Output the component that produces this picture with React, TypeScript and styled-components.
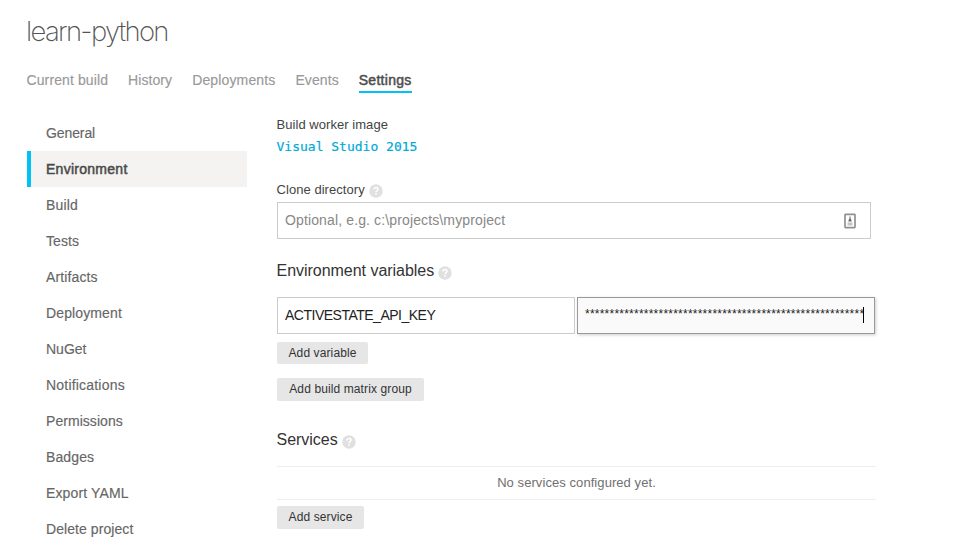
import React from "react";
import styled, { createGlobalStyle } from "styled-components";

const GlobalStyle = createGlobalStyle`
  * { box-sizing: border-box; }
  html, body { margin: 0; padding: 0; background: #fff; }
  body {
    font-family: "Liberation Sans", Arial, sans-serif;
    font-size: 14px;
    color: #333;
    overflow: hidden;
  }
`;

const Page = styled.div`
  width: 979px;
  height: 553px;
  padding: 0 0 0 27px;
  overflow: hidden;
`;

const Title = styled.h1`
  margin: 0 0 0 -1px;
  padding-top: 14px;
  height: 70px;
  font-family: Inter, "Liberation Sans", sans-serif;
  font-size: 27.5px;
  font-weight: 200;
  line-height: 34px;
  letter-spacing: -1.68px;
  color: #555;
`;

const Tabs = styled.nav`
  display: flex;
  gap: 20px;
  height: 45px;
  margin-left: -0.5px;
`;

const Tab = styled.a<{ $active?: boolean; $tracking: number }>`
  height: 23px;
  line-height: 20px;
  white-space: nowrap;
  letter-spacing: ${(p) => p.$tracking}px;
  color: ${(p) => (p.$active ? "#4d4d4d" : "#999")};
  border-bottom: 2px solid ${(p) => (p.$active ? "#00c3f5" : "transparent")};
  -webkit-text-stroke: ${(p) => (p.$active ? "0.5px #4d4d4d" : "0.15px #999")};
`;

const Columns = styled.div`
  display: flex;
  align-items: flex-start;
`;

const Sidebar = styled.nav`
  width: 220px;
  margin-right: 30px;
  flex: none;
`;

const SideItem = styled.a<{ $active?: boolean; $tracking: number }>`
  display: block;
  height: 36px;
  line-height: 36px;
  padding-left: 15px;
  border-left: 4px solid ${(p) => (p.$active ? "#00c3f5" : "transparent")};
  background: ${(p) => (p.$active ? "#f4f3f1" : "transparent")};
  color: ${(p) => (p.$active ? "#4a4a4a" : "#666")};
  letter-spacing: ${(p) => p.$tracking}px;
  -webkit-text-stroke: ${(p) => (p.$active ? "0.5px #4a4a4a" : "0.15px #666")};
`;

const Main = styled.main`
  width: 599px;
`;

const Label = styled.div`
  display: flex;
  height: 20px;
  margin-left: -0.5px;
  line-height: 20px;
  font-size: 13px;
  letter-spacing: 0.05px;
  color: #444;
`;

const ImageLink = styled.a`
  display: block;
  height: 20px;
  margin: 2px 0 23px -0.5px;
  line-height: 20px;
  font-family: "DejaVu Sans Mono", monospace;
  font-size: 13px;
  color: #00a9d8;
  -webkit-text-stroke: 0.2px #00a9d8;
`;

const Heading = styled.h2<{ $top: number; $bottom: number }>`
  display: flex;
  height: 22px;
  margin: ${(p) => p.$top}px 0 ${(p) => p.$bottom}px -0.5px;
  line-height: 22px;
  font-size: 16px;
  font-weight: 400;
  letter-spacing: -0.03px;
  color: #333;
`;

const HelpSvg = styled.svg<{ $top: number }>`
  flex: none;
  margin: ${(p) => p.$top}px 0 0 4px;
`;

const InputRow = styled.div`
  display: flex;
  gap: 2px;
`;

const Field = styled.div<{ $width: number; $focus?: boolean; $top?: number }>`
  display: flex;
  align-items: center;
  width: ${(p) => p.$width}px;
  height: 37px;
  margin-top: ${(p) => p.$top ?? 0}px;
  padding: 0 7px;
  white-space: nowrap;
  border: 1px solid ${(p) => (p.$focus ? "#999" : "#ccc")};
  background: ${(p) => (p.$focus ? "#fafafa" : "#fff")};
  box-shadow: ${(p) => (p.$focus ? "1px 1px 3px rgba(0,0,0,.2)" : "none")};
  color: #222;
`;

const Placeholder = styled.span`
  flex: 1;
  padding-bottom: 2px;
  letter-spacing: 0.13px;
  color: #888;
`;

const Value = styled.span`
  padding-bottom: 1px;
  letter-spacing: -0.5px;
`;

const Secret = styled.span`
  padding-bottom: 3px;
  font-size: 12px;
  letter-spacing: 0.23px;
`;

const Caret = styled.span`
  width: 1px;
  height: 16px;
  margin-bottom: 1px;
  margin-left: -1px;
  background: #000;
`;

const Button = styled.button<{ $width: number; $top: number; $height?: number }>`
  display: block;
  width: ${(p) => p.$width}px;
  height: ${(p) => p.$height ?? 23}px;
  margin: ${(p) => p.$top}px 0 0;
  padding: 0;
  border: 0;
  border-radius: 2px;
  background: #e6e6e6;
  color: #333;
  font: 12px/21px "Liberation Sans", Arial, sans-serif;
  letter-spacing: 0.11px;
  white-space: nowrap;
`;

const EmptyRow = styled.div`
  height: 34px;
  border-top: 1px solid #eee;
  border-bottom: 1px solid #eee;
  text-align: center;
  line-height: 32px;
  font-size: 13px;
  letter-spacing: 0.07px;
  color: #707070;
`;

const Help = ({ top }: { top: number }) => (
  <HelpSvg $top={top} width="14" height="14" viewBox="0 0 14 14">
    <circle cx="7" cy="7" r="6.7" fill="#e0e0e0" />
    <path
      d="M5 5.500C5 4.300 5.900 3.600 7 3.600s2 .7 2 1.700C9 6.600 7 6.500 7 8.200"
      fill="none"
      stroke="#fff"
      strokeWidth="1.5"
    />
    <rect x="6.200" y="9.100" width="1.600" height="1.600" fill="#fff" />
  </HelpSvg>
);

const CredentialIcon = () => (
  <svg width="12" height="16" viewBox="0 0 12 16">
    <rect x="1" y="1.300" width="10" height="13.400" rx="0.600" fill="#fff" stroke="#909090" strokeWidth="1.700" />
    <path d="M6 3.500v2.500" stroke="#999" strokeWidth="1.600" />
    <path d="M4.300 8.600h3.400L7 6H5z" fill="#666" />
    <path d="M3.500 9.500h5v3h-5z" fill="#c4c4c4" />
  </svg>
);

const IconSlot = styled.span`
  display: flex;
  margin-right: 7px;
`;

const tabs = [
  { name: "Current build", tracking: 0.11 },
  { name: "History", tracking: 0.07 },
  { name: "Deployments", tracking: 0.14 },
  { name: "Events", tracking: 0.09 },
  { name: "Settings", tracking: 0.28, active: true },
];

const sections = [
  { name: "General", tracking: -0.1 },
  { name: "Environment", tracking: 0.27, active: true },
  { name: "Build", tracking: 0.15 },
  { name: "Tests", tracking: 0.1 },
  { name: "Artifacts", tracking: 0.12 },
  { name: "Deployment", tracking: 0.12 },
  { name: "NuGet", tracking: 0 },
  { name: "Notifications", tracking: 0.2 },
  { name: "Permissions", tracking: 0.05 },
  { name: "Badges", tracking: 0.12 },
  { name: "Export YAML", tracking: 0.13 },
  { name: "Delete project", tracking: 0.07 },
];

export default function App() {
  return (
    <>
      <GlobalStyle />
      <Page>
        <Title>learn-python</Title>
        <Tabs>
          {tabs.map((t) => (
            <Tab key={t.name} $active={t.active} $tracking={t.tracking}>
              {t.name}
            </Tab>
          ))}
        </Tabs>
        <Columns>
          <Sidebar>
            {sections.map((s) => (
              <SideItem key={s.name} $active={s.active} $tracking={s.tracking}>
                {s.name}
              </SideItem>
            ))}
          </Sidebar>
          <Main>
            <Label>Build worker image</Label>
            <ImageLink>Visual Studio 2015</ImageLink>
            <Label>
              Clone directory
              <Help top={4} />
            </Label>
            <Field $width={594} $top={2}>
              <Placeholder>Optional, e.g. c:\projects\myproject</Placeholder>
              <IconSlot>
                <CredentialIcon />
              </IconSlot>
            </Field>
            <Heading $top={21} $bottom={15}>
              Environment variables
              <Help top={6} />
            </Heading>
            <InputRow>
              <Field $width={298}>
                <Value>ACTIVESTATE_API_KEY</Value>
              </Field>
              <Field $width={298} $focus>
                <Secret>{"*".repeat(57)}</Secret>
                <Caret />
              </Field>
            </InputRow>
            <Button $width={91} $top={8} $height={22}>Add variable</Button>
            <Button $width={147} $top={14}>Add build matrix group</Button>
            <Heading $top={28} $bottom={15}>
              Services
              <Help top={6} />
            </Heading>
            <EmptyRow>No services configured yet.</EmptyRow>
            <Button $width={87} $top={6}>Add service</Button>
          </Main>
        </Columns>
      </Page>
    </>
  );
}
